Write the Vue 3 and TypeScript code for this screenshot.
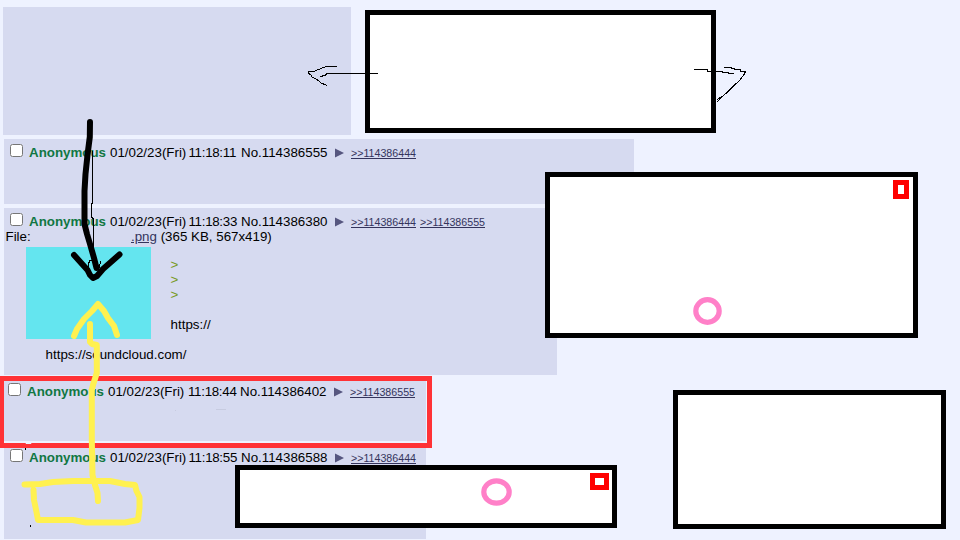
<script setup lang="ts">
interface Post {
  kind: string
  date: string
  time: string
  no: string
  replies: string[]
  file?: boolean
}

const posts: Post[] = [
  { kind: 'short', date: '01/02/23(Fri)', time: '11:18:11', no: '114386555', replies: ['114386444'] },
  { kind: 'media', date: '01/02/23(Fri)', time: '11:18:33', no: '114386380', replies: ['114386444', '114386555'], file: true },
  { kind: 'marked', date: '01/02/23(Fri)', time: '11:18:44', no: '114386402', replies: ['114386555'] },
  { kind: 'last', date: '01/02/23(Fri)', time: '11:18:55', no: '114386588', replies: ['114386444'] },
]
</script>

<template>
  <main class="board">
    <section class="post blank"></section>
    <article v-for="p in posts" :key="p.no" class="post" :class="p.kind">
      <header class="info">
        <input type="checkbox" class="check" />
        <span class="name">Anonymous</span>
        <span class="date">{{ p.date }}</span>
        <span class="time">{{ p.time }}</span>
        <span class="no">No.{{ p.no }}</span>
        <svg class="menu" viewBox="0 0 9 10"><path d="M0 .5 9 5 0 9.500Z" fill="#56567f" /></svg>
        <span class="replies"><a v-for="r in p.replies" :key="r">&gt;&gt;{{ r }}</a></span>
      </header>
      <template v-if="p.file">
        <div class="file"><span class="label">File:</span><a>.png</a>&nbsp;(365 KB, 567x419)</div>
        <div class="body">
          <div class="thumb"></div>
          <div class="message">
            <span class="quote">&gt;</span>
            <span class="quote">&gt;</span>
            <span class="quote">&gt;</span>
            <span class="url">https://</span>
          </div>
        </div>
        <div class="cloud">https://soundcloud.com/</div>
      </template>
    </article>

    <svg class="drawing" viewBox="0 0 960 540" fill="none">
      <g stroke="#000" stroke-width="5" fill="#fff">
        <rect x="367.500" y="12.500" width="346" height="118" />
        <rect x="547.500" y="174.500" width="368" height="161" />
        <rect x="237.500" y="467.500" width="377" height="58" />
        <rect x="675.500" y="392.500" width="268" height="134" />
      </g>
      <g stroke="#f00" stroke-width="5">
        <rect x="895.500" y="182.500" width="11" height="14" />
        <rect x="592.500" y="475.500" width="14" height="12" />
      </g>
      <g stroke="#ff80c8" stroke-width="5.200">
        <ellipse cx="707.500" cy="311" rx="11.700" ry="11.300" />
        <ellipse cx="496.500" cy="492" rx="12.700" ry="11.200" />
      </g>
      <rect x="1.500" y="378.500" width="428" height="67" stroke="#ff3236" stroke-width="5" />
      <g stroke="#000" stroke-width="1" shape-rendering="crispEdges">
        <path d="M378 73.500H327L325 75.500L320 76.500M337 66.500H326L321 68.500L316 70.500L314 71.500H308.500V73.500L310.500 74.500L312 77L317 79.500L321 83L327 85.500" />
        <path d="M694 69.500H707.500V71.500H722V72.500H728V73.500H734M724 67.500H731V68.500H734V69.500H740.500V71.500H745.500L743.500 75.500L739 81L733.500 86L728 91.500L723 96L716.500 102.500M717 100L722 96" />
        <path d="M92.500 151V203L91.500 204V217L93.500 219V266M88.500 268V264.500L89.500 260.500H93M97.500 270V264.500L99.500 267L100.500 261" />
      </g>
      <g stroke="#000" stroke-width="6" stroke-linecap="round" stroke-linejoin="round">
        <path d="M90 122L89.800 137L87.500 155L85.500 174L84.500 191V224L87 234L90 244L94 258L96.500 268" />
        <path d="M74 255L83 265L87.500 270L90 275L93 278L97 276L103 269L111 262L119.500 254.500" />
      </g>
      <g stroke="#fff150" stroke-width="6" stroke-linecap="round" stroke-linejoin="round">
        <path d="M74 336L77 329L84 319L92 311L98 304L104 311L108 318L114 326L117 335" />
        <path d="M90 324V342L92 344L96.800 345V373L93 385L91.800 390V440L92.500 475L95 485L97.500 493L98 501" />
        <path d="M24.500 484.500L40 484L53 482L73 481H110L125 484L135 485L136.500 491L139.500 497V508L138 520L125 522.500H86L73 520H38L36.500 512L34 500L33.500 490" />
      </g>
      <path d="M30 525h1v2h-1ZM25 448h1v2h-1Z" fill="#000" />
      <path d="M25 442h7l-1 2h-5Z" fill="#eef2ff" />
      <path d="M216 409.500h10M175 410.500h1" stroke="#c7cbe0" stroke-width="1" />
    </svg>
  </main>
</template>

<style>
body {
  margin: 0;
}
</style>

<style scoped>
.board {
  position: relative;
  box-sizing: border-box;
  display: flex;
  flex-direction: column;
  gap: 4px;
  width: 960px;
  height: 540px;
  padding: 7px 0 0 4px;
  overflow: hidden;
  background: #eef2ff;
  color: #000;
  font: 13.333px/15px "Liberation Sans", Arial, sans-serif;
}
.post {
  flex: none;
  box-sizing: border-box;
  background: #d6daf0;
}
.blank {
  width: 348px;
  height: 128px;
  margin-left: -1px;
}
.short {
  width: 630px;
  height: 65px;
  padding-top: 6px;
}
.media {
  width: 553px;
  height: 167px;
  padding-top: 6px;
}
.marked {
  width: 422px;
  height: 62px;
  padding-top: 5px;
}
.marked .info {
  grid-template-columns: 19px 81px 80px 52px 94px 16px auto;
  margin-left: -2px;
}
.last {
  width: 422px;
  height: 94px;
  padding-top: 5px;
}
.info {
  display: grid;
  grid-template-columns: 19px 81px 78.500px 52.500px 94px 16px auto;
  align-items: start;
  height: 15px;
  padding-left: 6px;
  white-space: nowrap;
}
.check {
  width: 13px;
  height: 13px;
  margin: -1px 0 0;
}
.name {
  color: #117743;
  font-weight: 700;
}
.time {
  letter-spacing: -0.3px;
}
.menu {
  width: 9px;
  height: 10px;
  margin-top: 3px;
}
.replies {
  display: flex;
  gap: 4px;
  font-size: 10.66px;
  line-height: 16px;
}
a {
  color: #34345c;
  text-decoration: underline;
}
.file {
  display: flex;
  padding-left: 1.500px;
}
.label {
  width: 125.500px;
}
.body {
  display: flex;
  gap: 19.600px;
  padding: 3px 0 0 22px;
}
.thumb {
  width: 125px;
  height: 92px;
  background: #64e5ef;
}
.message {
  display: flex;
  flex-direction: column;
  padding-top: 10px;
}
.quote {
  color: #789922;
}
.url {
  margin-top: 15px;
}
.cloud {
  padding: 8px 0 0 41.600px;
}
.drawing {
  position: absolute;
  top: 0;
  left: 0;
  width: 960px;
  height: 540px;
  pointer-events: none;
}
</style>
